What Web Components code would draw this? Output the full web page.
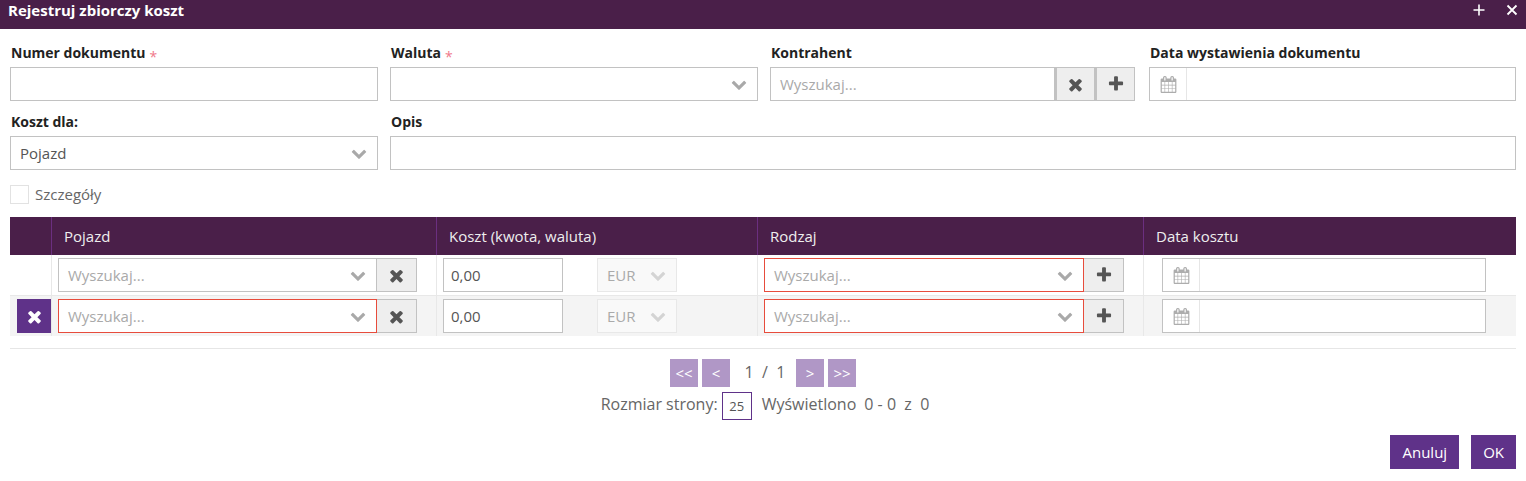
<!DOCTYPE html>
<html lang="pl">
<head>
<meta charset="utf-8">
<title>Rejestruj zbiorczy koszt</title>
<style>
  html, body { margin: 0; padding: 0; background: #fff; }
  body { font: 15px/20px "Open Sans", "Liberation Sans", sans-serif; color: #555; overflow: hidden; }
</style>
</head>
<body>
<jn-dialog heading="Rejestruj zbiorczy koszt">
  <jn-form>
    <jn-field label="Numer dokumentu" required style="grid-column:1"><jn-box></jn-box></jn-field>
    <jn-field label="Waluta" required style="grid-column:3"><jn-box chevron></jn-box></jn-field>
    <jn-field label="Kontrahent" style="grid-column:5">
      <jn-group><jn-box placeholder="Wyszukaj..."></jn-box><jn-icon-btn icon="times" joined></jn-icon-btn><jn-icon-btn icon="plus" joined></jn-icon-btn></jn-group>
    </jn-field>
    <jn-field label="Data wystawienia dokumentu" style="grid-column:7"><jn-date></jn-date></jn-field>
    <jn-field label="Koszt dla:" style="grid-column:1"><jn-box chevron value="Pojazd"></jn-box></jn-field>
    <jn-field label="Opis" style="grid-column:3 / 8"><jn-box></jn-box></jn-field>
  </jn-form>
  <jn-check label="Szczegóły"></jn-check>
  <jn-table>
    <jn-head>
      <span></span><span>Pojazd</span><span>Koszt (kwota, waluta)</span><span>Rodzaj</span><span>Data kosztu</span>
    </jn-head>
    <jn-row></jn-row>
    <jn-row removable alt vehicle-error></jn-row>
  </jn-table>
  <jn-pager page="1" pages="1" size="25" from="0" to="0" total="0"></jn-pager>
  <jn-footer>
    <jn-button>Anuluj</jn-button>
    <jn-button>OK</jn-button>
  </jn-footer>
</jn-dialog>

<script>
const PATHS = {
  times: 'M1490 1322q0 40-28 68l-136 136q-28 28-68 28t-68-28l-294-294-294 294q-28 28-68 28t-68-28l-136-136q-28-28-28-68t28-68l294-294-294-294q-28-28-28-68t28-68l136-136q28-28 68-28t68 28l294 294 294-294q28-28 68-28t68 28l136 136q28 28 28 68t-28 68l-294 294 294 294q28 28 28 68z',
  plus: 'M1600 736v192q0 40-28 68t-68 28h-416v416q0 40-28 68t-68 28h-192q-40 0-68-28t-28-68v-416h-416q-40 0-68-28t-28-68v-192q0-40 28-68t68-28h416v-416q0-40 28-68t68-28h192q40 0 68 28t28 68v416h416q40 0 68 28t28 68z',
  chevron: 'M1683 808l-742 741q-19 19-45 19t-45-19l-742-741q-19-19-19-45.5t19-45.5l166-165q19-19 45-19t45 19l531 531 531-531q19-19 45-19t45 19l166 165q19 19 19 45.5t-19 45.5z',
  calendar: 'M192 1664h288v-288h-288v288zm352 0h320v-288h-320v288zm-352-352h288v-320h-288v320zm352 0h320v-320h-320v320zm-352-384h288v-288h-288v288zm736 736h320v-288h-320v288zm-384-736h320v-288h-320v288zm768 736h288v-288h-288v288zm-384-352h320v-320h-320v320zm-352-864v-288q0-13-9.5-22.5t-22.5-9.5h-64q-13 0-22.5 9.5t-9.5 22.5v288q0 13 9.5 22.5t22.5 9.5h64q13 0 22.5-9.5t9.5-22.5zm736 864h288v-320h-288v320zm-384-384h320v-288h-320v288zm384 0h288v-288h-288v288zm32-480v-288q0-13-9.5-22.5t-22.5-9.5h-64q-13 0-22.5 9.5t-9.5 22.5v288q0 13 9.5 22.5t22.5 9.5h64q13 0 22.5-9.5t9.5-22.5zm384-64v1280q0 52-38 90t-90 38h-1408q-52 0-90-38t-38-90v-1280q0-52 38-90t90-38h128v-96q0-66 47-113t113-47h64q66 0 113 47t47 113v96h384v-96q0-66 47-113t113-47h64q66 0 113 47t47 113v96h128q52 0 90 38t38 90z'
};

function icon(name, size, color) {
  return `<svg viewBox="0 0 1792 1792" width="${size}" height="${size}" fill="${color}" aria-hidden="true"><path d="${PATHS[name]}"/></svg>`;
}

class Dialog extends HTMLElement {
  constructor() {
    super();
    this.attachShadow({ mode: 'open' });
    this.shadowRoot.innerHTML = `
    <style>
      :host { display: block; width: 1526px; height: 481px; }
      .bar {
        height: 29px;
        background: #4a1f49;
        color: #fff;
        display: flex;
        align-items: center;
        padding: 0 8px;
        box-sizing: border-box;
        font-weight: 700;
        font-size: 15px;
      }
      .title { flex: 1; margin-top: -9px; }
      .tools { display: flex; gap: 21px; margin-top: -9px; }
      svg { display: block; }
      .body { padding: 0 10px; }
    </style>
    <div class="bar">
      <span class="title">${this.getAttribute('heading')}</span>
      <div class="tools">
        <svg width="12" height="12" viewBox="0 0 12 12" stroke="#fff" stroke-width="1.6"><path d="M6 .5v11M.5 6h11"/></svg>
        <svg width="12" height="12" viewBox="0 0 12 12" stroke="#fff" stroke-width="1.8"><path d="M1.5 1.5l9 9M10.5 1.5l-9 9"/></svg>
      </div>
    </div>
    <div class="body"><slot></slot></div>
    `;
  }
}

class Form extends HTMLElement {
  constructor() {
    super();
    this.attachShadow({ mode: 'open' });
    this.shadowRoot.innerHTML = `
    <style>
      :host {
        display: grid;
        grid-template-columns: 368px 12px 368px 12px 365px 14px 367px;
        row-gap: 11px;
        padding-top: 14px;
      }
    </style>
    <slot></slot>
    `;
  }
}

class Field extends HTMLElement {
  constructor() {
    super();
    this.attachShadow({ mode: 'open' });
    const star = this.hasAttribute('required') ? '<span class="req">*</span>' : '';
    this.shadowRoot.innerHTML = `
    <style>
      :host { display: block; }
      label { display: block; height: 20px; margin: 0 0 4px 1px; color: #222; font-weight: 700; font-size: 14px; line-height: 20px; }
      .req { color: #f0788a; font-weight: 400; margin-left: 4px; vertical-align: -4px; line-height: 0; }
    </style>
    <label>${this.getAttribute('label')}${star}</label>
    <slot></slot>
    `;
  }
}

class Box extends HTMLElement {
  constructor() {
    super();
    this.attachShadow({ mode: 'open' });
    const value = this.getAttribute('value') || '';
    const ph = this.getAttribute('placeholder') || '';
    const chevron = this.hasAttribute('chevron') ? icon('chevron', 16, this.hasAttribute('disabled') ? '#d4d4d4' : '#a9a9a9') : '';
    this.shadowRoot.innerHTML = `
    <style>
      :host {
        display: flex;
        align-items: center;
        height: 34px;
        flex: 1;
        box-sizing: border-box;
        border: 1px solid #c2c2c2;
        background: #fff;
        padding: 0 9px;
        color: #555;
        min-width: 0;
      }
      :host([error]) { border-color: #e74c3c; }
      :host([disabled]) { border-color: #e8e8e8; background: #f9f9f9; color: #aaa; }
      :host(.amount) { padding-left: 7px; }
      span { flex: 1; white-space: nowrap; }
      .ph { color: #a9a9a9; }
      svg { flex: none; margin-right: 1px; }
    </style>
    <span class="${value ? '' : 'ph'}">${value || ph}</span>${chevron}
    `;
  }
}

class Group extends HTMLElement {
  constructor() {
    super();
    this.attachShadow({ mode: 'open' });
    this.shadowRoot.innerHTML = `
    <style>:host { display: flex; }</style>
    <slot></slot>
    `;
  }
}

class IconBtn extends HTMLElement {
  constructor() {
    super();
    this.attachShadow({ mode: 'open' });
    const name = this.getAttribute('icon');
    this.shadowRoot.innerHTML = `
    <style>
      :host {
        display: flex;
        flex: none;
        width: 40px;
        height: 34px;
        box-sizing: border-box;
        align-items: center;
        justify-content: center;
        background: #eee;
        border: 1px solid #c2c2c2;
        border-left-width: 0;
      }
      :host([joined]) { border-left-width: 2px; }
      svg { display: block; }
    </style>
    ${icon(name, name === 'times' ? 19 : 18, '#555')}
    `;
  }
}

class DateBox extends HTMLElement {
  constructor() {
    super();
    this.attachShadow({ mode: 'open' });
    this.shadowRoot.innerHTML = `
    <style>
      :host { display: flex; height: 34px; box-sizing: border-box; border: 1px solid #c2c2c2; background: #fff; }
      .addon { flex: none; width: 36px; border-right: 1px solid #e6e6e6; display: flex; align-items: center; justify-content: center; }
      svg { display: block; }
    </style>
    <div class="addon">${icon('calendar', 17, '#adadad')}</div>
    `;
  }
}

class Check extends HTMLElement {
  constructor() {
    super();
    this.attachShadow({ mode: 'open' });
    this.shadowRoot.innerHTML = `
    <style>
      :host { display: flex; align-items: center; gap: 6px; height: 19px; margin: 15px 0 13px; color: #666; }
      i { display: block; width: 19px; height: 19px; box-sizing: border-box; border: 1px solid #e2e2e2; background: #fff; }
      span { margin-top: -2px; }
    </style>
    <i></i><span>${this.getAttribute('label')}</span>
    `;
  }
}

const COLUMNS = '42px 385px 321px 386px 372px';

class Table extends HTMLElement {
  constructor() {
    super();
    this.attachShadow({ mode: 'open' });
    this.shadowRoot.innerHTML = `
    <style>
      :host { display: block; border-bottom: 1px solid #e6e6e6; padding-bottom: 12px; }
    </style>
    <slot></slot>
    `;
  }
}

class Head extends HTMLElement {
  constructor() {
    super();
    this.attachShadow({ mode: 'open' });
    this.shadowRoot.innerHTML = `
    <style>
      :host {
        display: grid;
        grid-template-columns: ${COLUMNS};
        height: 38px;
        background: #4a1f49;
        color: #eee;
      }
      ::slotted(span) { display: flex; align-items: center; padding-left: 12px; border-right: 1px solid #6b2f80; box-sizing: border-box; }
      ::slotted(span:last-child) { border-right: 0; }
    </style>
    <slot></slot>
    `;
  }
}

class Row extends HTMLElement {
  constructor() {
    super();
    this.attachShadow({ mode: 'open' });
    const remove = this.hasAttribute('removable') ? `<div class="del">${icon('times', 19, '#fff')}</div>` : '';
    const vehicleErr = this.hasAttribute('vehicle-error') ? 'error' : '';
    this.shadowRoot.innerHTML = `
    <style>
      :host {
        display: grid;
        grid-template-columns: ${COLUMNS};
        height: 41px;
        box-sizing: border-box;
        border-bottom: 1px solid #e8e8e8;
      }
      :host([alt]) { background: #f4f4f4; border-bottom: 0; height: 40px; }
      .cell { display: flex; padding: 3px 0 0 6px; border-right: 1px solid #e8e8e8; box-sizing: border-box; }
      .first { padding-left: 7px; }
      .last { border-right: 0; padding-left: 18px; }
      .del { width: 34px; height: 34px; background: #5f3289; display: flex; align-items: center; justify-content: center; }
      .del svg { display: block; }
      .veh { width: 319px; flex: none; }
      .amount { width: 120px; flex: none; }
      .cur { width: 80px; flex: none; margin-left: 34px; }
      .kind { width: 320px; flex: none; }
      jn-date { width: 324px; }
    </style>
    <div class="cell first">${remove}</div>
    <div class="cell"><jn-box class="veh" chevron placeholder="Wyszukaj..." ${vehicleErr}></jn-box><jn-icon-btn icon="times"></jn-icon-btn></div>
    <div class="cell"><jn-box class="amount" value="0,00"></jn-box><jn-box class="cur" chevron disabled value="EUR"></jn-box></div>
    <div class="cell"><jn-box class="kind" chevron error placeholder="Wyszukaj..."></jn-box><jn-icon-btn icon="plus"></jn-icon-btn></div>
    <div class="cell last"><jn-date></jn-date></div>
    `;
  }
}

class Pager extends HTMLElement {
  constructor() {
    super();
    this.attachShadow({ mode: 'open' });
    const a = n => this.getAttribute(n);
    this.shadowRoot.innerHTML = `
    <style>
      :host { display: block; padding-top: 10px; color: #666; font-size: 16px; }
      .nav, .info { display: flex; justify-content: center; align-items: center; }
      .nav { height: 28px; gap: 4px; }
      b {
        width: 28px; height: 28px; background: #b097c6; color: #fff; font-weight: 400; font-size: 15px;
        display: flex; align-items: center; justify-content: center;
      }
      .count { width: 58px; box-sizing: border-box; padding-left: 4px; margin-top: -2px; text-align: center; white-space: pre; }
      .info { height: 28px; margin: 5px 0 0 4px; }
      .info span { margin-top: -4px; }
      .info .size { margin-top: 0; }
      .size { width: 30px; height: 28px; box-sizing: border-box; border: 1px solid #5f3289; padding-bottom: 1px; font-size: 13px; color: #555; display: flex; align-items: center; justify-content: center; margin: 0 10px 0 4px; }
      .nums { white-space: pre; margin-left: 8px; }
    </style>
    <div class="nav">
      <b>&lt;&lt;</b><b>&lt;</b>
      <span class="count">${a('page')}  /  ${a('pages')}</span>
      <b>&gt;</b><b>&gt;&gt;</b>
    </div>
    <div class="info">
      <span>Rozmiar strony:</span><span class="size">${a('size')}</span>
      <span>Wyświetlono</span><span class="nums">${a('from')} - ${a('to')}  z  ${a('total')}</span>
    </div>
    `;
  }
}

class Footer extends HTMLElement {
  constructor() {
    super();
    this.attachShadow({ mode: 'open' });
    this.shadowRoot.innerHTML = `
    <style>:host { display: flex; justify-content: flex-end; gap: 12px; margin-top: 15px; }</style>
    <slot></slot>
    `;
  }
}

class Button extends HTMLElement {
  constructor() {
    super();
    this.attachShadow({ mode: 'open' });
    this.shadowRoot.innerHTML = `
    <style>
      :host { display: flex; align-items: center; height: 34px; padding: 0 12px; background: #5f3289; color: #fff; }
    </style>
    <slot></slot>
    `;
  }
}

customElements.define('jn-box', Box);
customElements.define('jn-icon-btn', IconBtn);
customElements.define('jn-date', DateBox);
customElements.define('jn-group', Group);
customElements.define('jn-field', Field);
customElements.define('jn-form', Form);
customElements.define('jn-check', Check);
customElements.define('jn-head', Head);
customElements.define('jn-row', Row);
customElements.define('jn-table', Table);
customElements.define('jn-pager', Pager);
customElements.define('jn-footer', Footer);
customElements.define('jn-button', Button);
customElements.define('jn-dialog', Dialog);
</script>
</body>
</html>
